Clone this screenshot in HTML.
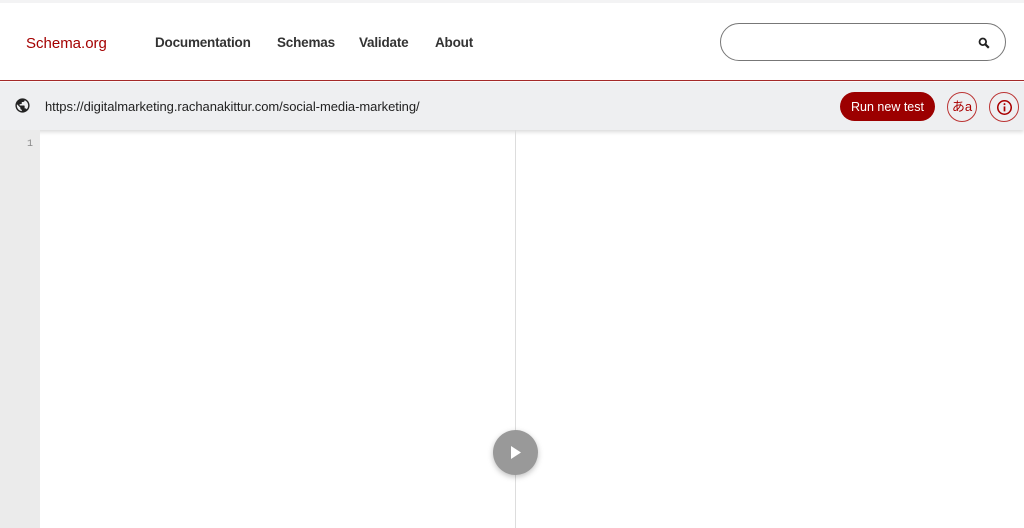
<!DOCTYPE html>
<html><head><meta charset="utf-8"><style>
*{margin:0;padding:0;box-sizing:border-box}
body{width:1024px;height:528px;overflow:hidden;background:#fff;font-family:"Liberation Sans","Noto Sans CJK JP",sans-serif;position:relative}
.top{position:absolute;left:0;top:0;width:1024px;height:3px;background:#f3f3f4}
.hdr{position:absolute;top:3px;left:0;width:1024px;height:78px;border-bottom:1px solid #a52a2a}
.logo{position:absolute;left:26px;top:32px;font-size:15px;color:#a40000}
.nav{position:absolute;top:32px;font-size:13.5px;color:#333;font-weight:bold;letter-spacing:-0.2px}
.search{position:absolute;left:720px;top:20px;width:286px;height:38px;border:1px solid #777;border-radius:19px}
.bar{position:absolute;top:82px;left:0;width:1024px;height:48px;background:#eeeff1;box-shadow:0 2px 4px rgba(0,0,0,.15)}
.url{position:absolute;left:45px;top:17px;font-size:13px;letter-spacing:-0.05px;color:#222}
.run{position:absolute;left:840px;top:10px;width:95px;height:29px;border-radius:15px;background:#9c0000;color:#fff;font-size:12.5px;text-align:center;line-height:31px}
.circ{position:absolute;top:10px;width:30px;height:30px;border-radius:50%;border:1px solid #b33;color:#a00;text-align:center;line-height:28px;font-size:13px}
.gut{position:absolute;left:0;top:130px;width:40px;height:398px;background:#ebebeb}
.ln{position:absolute;left:27px;top:139px;font-family:"Liberation Mono",monospace;font-size:10px;color:#888}
.div{position:absolute;left:515px;top:130px;width:1px;height:398px;background:#ddd}
.play{position:absolute;left:493px;top:430px;width:45px;height:45px;border-radius:50%;background:#999;box-shadow:0 2px 6px rgba(0,0,0,.25)}
</style></head><body>
<div class="top"></div>
<div class="hdr">
<div class="logo">Schema.org</div>
<div class="nav" style="left:155px">Documentation</div>
<div class="nav" style="left:277px">Schemas</div>
<div class="nav" style="left:359px">Validate</div>
<div class="nav" style="left:435px">About</div>
<div class="search"><svg style="position:absolute;left:257px;top:13px" width="12" height="12" viewBox="0 0 12 12"><circle cx="4.8" cy="4.8" r="3.3" fill="none" stroke="#222" stroke-width="1.8"/><path d="M7.3 7.3L10.8 10.8" stroke="#222" stroke-width="2.2"/></svg></div>
</div>
<div class="bar">
<svg style="position:absolute;left:14px;top:15px" width="17" height="17" viewBox="0 0 24 24"><path fill="#222" d="M12 2C6.48 2 2 6.48 2 12s4.48 10 10 10 10-4.48 10-10S17.52 2 12 2zm-1 17.93c-3.95-.49-7-3.85-7-7.93 0-.62.08-1.21.21-1.79L9 15v1c0 1.1.9 2 2 2v1.93zm6.9-2.54c-.26-.81-1-1.39-1.9-1.39h-1v-3c0-.55-.45-1-1-1H8v-2h2c.55 0 1-.45 1-1V7h2c1.1 0 2-.9 2-2v-.41c2.93 1.19 5 4.06 5 7.41 0 2.08-.8 3.97-2.1 5.39z"/></svg>
<div class="url">https://digitalmarketing.rachanakittur.com/social-media-marketing/</div>
<div class="run">Run new test</div>
<div class="circ" style="left:947px">あa</div>
<div class="circ" style="left:989px"><svg style="margin-top:6px" width="17" height="17" viewBox="0 0 24 24"><circle cx="12" cy="12" r="9.5" fill="none" stroke="#a00" stroke-width="2.2"/><rect x="10.8" y="10.5" width="2.4" height="7" fill="#a00"/><circle cx="12" cy="7.3" r="1.4" fill="#a00"/></svg></div>
</div>
<div class="gut"></div>
<div class="ln">1</div>
<div class="div"></div>
<div class="play"><svg style="position:absolute;left:18px;top:16px" width="11" height="13" viewBox="0 0 11 13"><path d="M0 0L10 6.5L0 13Z" fill="#fff"/></svg></div>
</body></html>
